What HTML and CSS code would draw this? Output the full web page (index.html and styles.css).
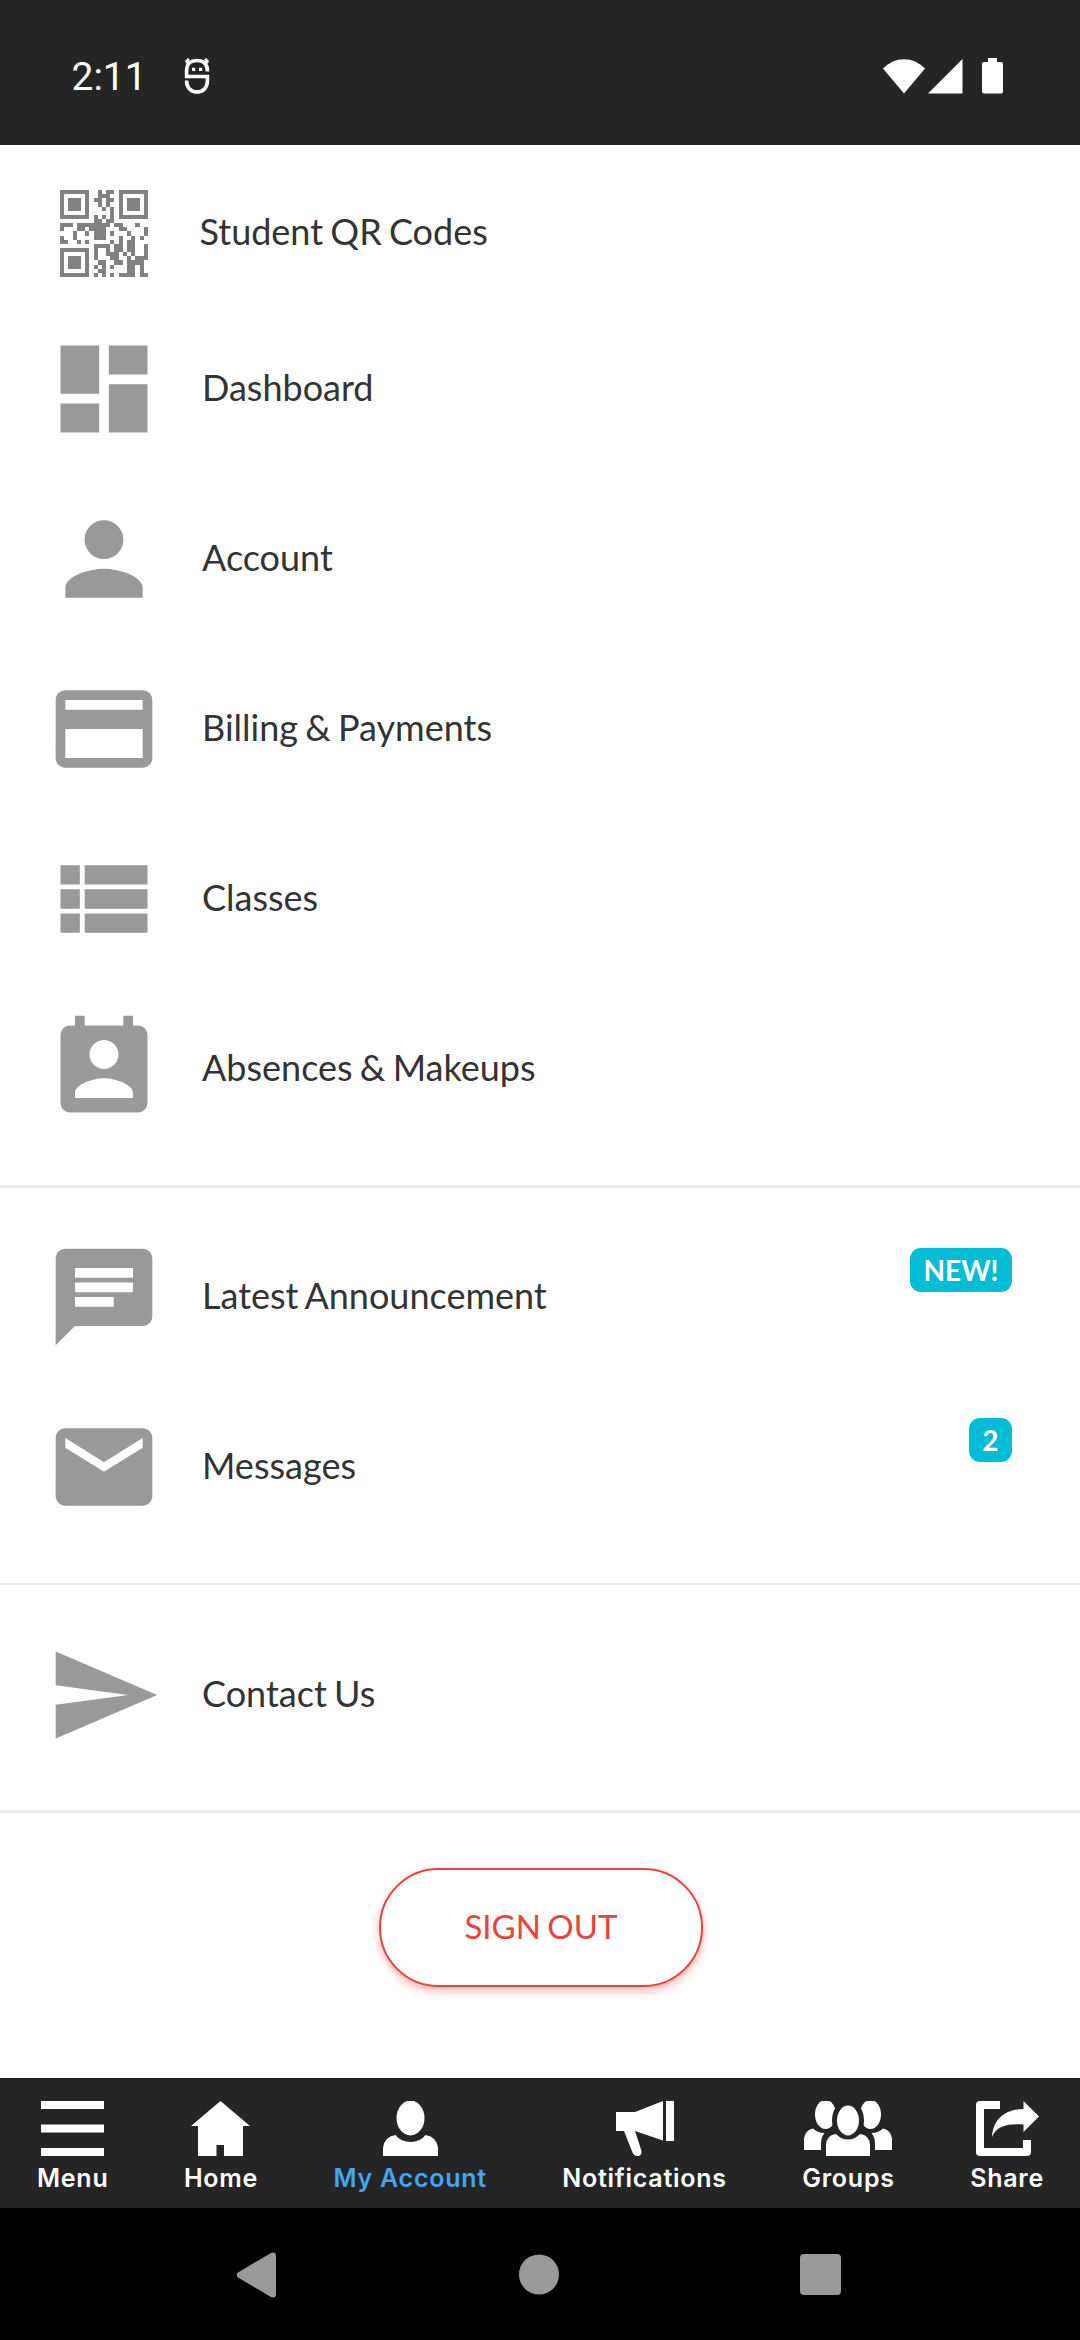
FILE: index.html
```html
<!DOCTYPE html>
<html lang="en">
<head>
<meta charset="utf-8">
<title>My Account</title>
<link rel="stylesheet" href="styles.css">
</head>
<body>
<header class="status">
  <span class="time">2:11</span>
  <svg class="logo" width="26" height="38" viewBox="0 0 26 38" fill="none" stroke="#fff" stroke-width="3.6"><path d="M23.5 14.500C23.500 6 19 3.500 13 3.500S2.600 6 2.600 14V19.500H23.400V24C23.400 31.500 18 35 13 35S2.600 31.500 2.600 24V23.500"/><path d="M1.500 3.500l5 3M4.500 1.500l-2 5M24.500 3.500l-5 3M21.500 1.500l2 5" stroke-width="2.400"/><path d="M8 12.300h3.200M15 12.300h3.200" stroke-width="3.200"/></svg>
  <span class="signals">
    <svg width="42" height="36" viewBox="0 0 42 36" fill="#fff"><path d="M0 10.500C12-2 30-2 42 10.500L21 35.500Z"/></svg>
    <svg class="cell" width="35" height="36" viewBox="0 0 35 36" fill="#fff"><path d="M0 35.500L34.500 1V35.500Z"/></svg>
    <svg class="battery" width="21" height="36" viewBox="0 0 21 36" fill="#fff"><path d="M6 0H15V4H19Q21 4 21 6V33.500Q21 35.500 19 35.500H2Q0 35.500 0 33.500V6Q0 4 2 4H6Z"/></svg>
  </span>
</header>

<main class="menu">
  <section class="group">
    <a class="row row-qr">
      <span class="icon"><svg width="88" height="87" viewBox="0 0 21 21" preserveAspectRatio="none" shape-rendering="crispEdges" fill="none" stroke="#818181"><path d="M.5 .5h6v6h-6zM14.500 .5h6v6h-6zM.5 14.500h6v6h-6z"/><path d="M2 3.500h3M16 3.500h3M2 17.500h3" stroke-width="3"/><path d="M9 .5h1m1 0h2M9 1.500h3M8 2.500h2m1 0h2M9 3.500h1m1 0h1M10 4.500h1m1 0h1M12 5.500h1M8 6.500h1m1 0h1m1 0h1M8 7.500h2m1 0h2M0 8.500h3m1 0h8m1 0h2m3 0h1M0 9.500h1m3 0h2m1 0h4m3 0h2m4 0h1M3 10.500h1m2 0h1m1 0h3m1 0h1m3 0h1m3 0h1M0 11.500h1m2 0h1m4 0h3m3 0h1m2 0h1m1 0h1M0 12.500h2m2 0h1m1 0h1m5 0h1m1 0h1m1 0h2M8 13.500h4m1 0h2m1 0h2m2 0h1M8 14.500h1m2 0h1m1 0h2m1 0h2m2 0h1M8 15.500h1m2 0h3m1 0h1m1 0h1m2 0h1M8 16.500h1m3 0h2m2 0h1m1 0h3M9 17.500h2m2 0h2m1 0h4M8 18.500h1m1 0h1m1 0h1m3 0h2m1 0h1M9 19.500h2m5 0h2m1 0h1M8 20.500h1m1 0h1m1 0h1m1 0h4m1 0h2"/></svg></span>
      <span class="label">Student QR Codes</span>
    </a>
    <a class="row">
      <span class="icon"><svg viewBox="0 0 24 24"><path d="M3 13h8V3H3v10zm0 8h8v-6H3v6zm10 0h8V11h-8v10zm0-18v6h8V3h-8z"/></svg></span>
      <span class="label">Dashboard</span>
    </a>
    <a class="row">
      <span class="icon"><svg viewBox="0 0 24 24"><path d="M12 12c2.210 0 4-1.790 4-4s-1.790-4-4-4-4 1.790-4 4 1.790 4 4 4zm0 2c-2.670 0-8 1.340-8 4v2h16v-2c0-2.660-5.330-4-8-4z"/></svg></span>
      <span class="label">Account</span>
    </a>
    <a class="row">
      <span class="icon"><svg viewBox="0 0 24 24"><path d="M20 4H4c-1.110 0-1.990.890-1.990 2L2 18c0 1.110.890 2 2 2h16c1.110 0 2-.890 2-2V6c0-1.110-.890-2-2-2zm0 14H4v-6h16v6zm0-10H4V6h16v2z"/></svg></span>
      <span class="label">Billing &amp; Payments</span>
    </a>
    <a class="row">
      <span class="icon"><svg viewBox="0 0 24 24"><path d="M3 14h4v-4H3v4zm0 5h4v-4H3v4zM3 9h4V5H3v4zm5 5h13v-4H8v4zm0 5h13v-4H8v4zM8 5v4h13V5H8z"/></svg></span>
      <span class="label">Classes</span>
    </a>
    <a class="row">
      <span class="icon"><svg viewBox="0 0 24 24"><path d="M19 3h-1V1h-2v2H8V1H6v2H5c-1.110 0-2 .9-2 2v14c0 1.100.890 2 2 2h14c1.100 0 2-.9 2-2V5c0-1.100-.9-2-2-2zm-7 3c1.660 0 3 1.340 3 3s-1.340 3-3 3-3-1.340-3-3 1.340-3 3-3zm6 12H6v-1c0-2 4-3.100 6-3.100s6 1.100 6 3.100v1z"/></svg></span>
      <span class="label">Absences &amp; Makeups</span>
    </a>
  </section>
  <section class="group messages">
    <a class="row">
      <span class="icon"><svg viewBox="0 0 24 24"><path d="M20 2H4c-1.100 0-1.990.9-1.990 2L2 22l4-4h14c1.100 0 2-.9 2-2V4c0-1.100-.9-2-2-2zM6 9h12v2H6V9zm8 5H6v-2h8v2zm4-6H6V6h12v2z"/></svg></span>
      <span class="label">Latest Announcement</span>
      <span class="badge">NEW!</span>
    </a>
    <a class="row">
      <span class="icon"><svg viewBox="0 0 24 24"><path d="M20 4H4c-1.100 0-1.990.9-1.990 2L2 18c0 1.100.9 2 2 2h16c1.100 0 2-.9 2-2V6c0-1.100-.9-2-2-2zm0 4l-8 5-8-5V6l8 5 8-5v2z"/></svg></span>
      <span class="label">Messages</span>
      <span class="badge">2</span>
    </a>
  </section>
  <section class="group contact">
    <a class="row">
      <span class="icon"><svg viewBox="0 0 24 24"><path d="M2.010 21L23 12 2.010 3 2 10l15 2-15 2z"/></svg></span>
      <span class="label">Contact Us</span>
    </a>
  </section>
  <button class="signout">SIGN OUT</button>
</main>

<nav class="tabs">
  <a class="tab"><svg width="63" height="55" viewBox="0 0 63 55"><path d="M0 0H63V8H0zM0 23.500H63V31.500H0zM0 47H63V55H0z"/></svg><span>Menu</span></a>
  <a class="tab"><svg width="59" height="55" viewBox="0 0 59 55"><path d="M29.500 0L59 25H52V55H33V44H25.500V55H7V25H0Z"/></svg><span>Home</span></a>
  <a class="tab active"><svg width="55" height="55" viewBox="0 0 55 55"><ellipse cx="27.500" cy="17" rx="14" ry="17.500"/><path d="M0 55V47Q1 36 12.500 34Q18 41 27.500 41T42.500 34Q54 36 55 47V55Z"/></svg><span>My Account</span></a>
  <a class="tab"><svg width="58" height="55" viewBox="0 0 58 55"><path d="M0 11H19L47 0V39.500L19 30L25.500 50Q26 55 21.500 55Q18 55 16.500 51.500L8 30H0ZM50 0H58V40H50Z"/></svg><span>Notifications</span></a>
  <a class="tab"><svg width="88" height="55" viewBox="0 0 88 55"><ellipse cx="21.500" cy="13.500" rx="10.500" ry="14.500"/><ellipse cx="66.500" cy="13.500" rx="10.500" ry="14.500"/><path d="M0 49V38Q1 29 9 27.500Q14 32 20.500 32Q17 36 17 43V49ZM88 49V38Q87 29 79 27.500Q74 32 67.500 32Q71 36 71 43V49Z"/><ellipse class="cut" cx="44" cy="19.500" rx="13.500" ry="17.500"/><path d="M22 55V44Q22.500 34 32 33Q37 38.500 44 38.500T56 33Q65.500 34 66 44V55Z"/></svg><span>Groups</span></a>
  <a class="tab"><svg width="63" height="55" viewBox="0 0 63 55"><path d="M24 0H4Q0 0 0 4V51Q0 55 4 55H51Q55 55 55 51V39H47V47H8V8H24ZM47.500 0L63 15.500L47.500 31V23.500C32 22.500 21 24.500 16 36C17 18 30 8 47.500 8Z"/></svg><span>Share</span></a>
</nav>

<footer class="system">
  <svg width="42" height="46" viewBox="0 0 42 46"><path d="M2 20.500L35 1Q40 -1 40 4V42Q40 47 35 45L2 25.500Q-.5 23 2 20.500Z"/></svg>
  <svg width="42" height="46" viewBox="0 0 42 46"><circle cx="21" cy="22.500" r="20"/></svg>
  <svg width="42" height="46" viewBox="0 0 42 46"><rect x="0" y="2" width="41" height="41" rx="4"/></svg>
</footer>
</body>
</html>
```
FILE: styles.css
```css
* { box-sizing: border-box; }

body {
  margin: 0;
  width: 1080px;
  height: 2340px;
  display: flex;
  flex-direction: column;
  background: #fff;
  color: #333;
  font-family: Lato, "Liberation Sans", sans-serif;
  overflow: hidden;
}

svg { display: block; flex: none; }

.status {
  height: 145px;
  flex: none;
  display: flex;
  align-items: center;
  padding: 6px 77px 0 71.500px;
  background: #252525;
  color: #fff;
}

.time {
  font: 39px/46px Roboto, "Liberation Sans", sans-serif;
  width: 112px;
  padding-top: 3px;
}

.signals {
  display: flex;
  margin-left: auto;
}

.cell { margin-left: 3px; }
.battery { margin-left: 19px; }

.menu {
  flex: 1;
  display: flex;
  flex-direction: column;
}

.group {
  padding: 24px 0 31px;
  border-bottom: 3px solid #ebebeb;
}

.group:first-child { padding-top: 0; }

.messages { border-bottom-width: 2px; }

.contact { padding: 25px 0 30px; }

.row {
  display: flex;
  align-items: center;
  height: 170px;
  padding: 0 68px 0 46px;
}

.row-qr {
  height: 159px;
  padding-top: 17px;
}

.row-qr .label { margin-left: 37.500px; }

.icon {
  width: 116px;
  display: flex;
  justify-content: center;
  fill: #999;
}

.icon svg { flex: 0 1 auto; }

.label {
  margin-left: 40px;
  padding-bottom: 4px;
  font-size: 36px;
  line-height: 44px;
  word-spacing: -2px;
}

.badge {
  align-self: flex-start;
  height: 44px;
  margin: 36px 0 0 auto;
  padding: 0 13.500px;
  border-radius: 11px;
  background: #00bcd4;
  color: #fff;
  font-size: 28px;
  font-weight: 700;
  line-height: 44px;
}

.signout {
  width: 324px;
  height: 119px;
  margin: 55px 0 0 379px;
  padding: 0 0 4px;
  border: 2px solid #e8443a;
  border-radius: 60px;
  background: #fff;
  box-shadow: 0 4px 8px rgba(244, 67, 54, .4);
  color: #e8443a;
  font: 33px/40px Lato, "Liberation Sans", sans-serif;
  word-spacing: -2px;
}

.tabs {
  height: 130px;
  flex: none;
  display: flex;
  justify-content: space-between;
  padding: 23px 36px 0 37px;
  background: #252525;
  color: #fff;
  fill: #fff;
  font: 600 25px/30px Inter, "Liberation Sans", sans-serif;
  letter-spacing: .75px;
}

.tab {
  display: flex;
  flex-direction: column;
  align-items: center;
  gap: 7px;
}

.active span { color: #42a5f5; }

.cut { stroke: #252525; stroke-width: 5px; }

.system {
  height: 132px;
  flex: none;
  display: flex;
  justify-content: space-between;
  padding: 44px 238px 0 236px;
  background: #000;
  fill: #999;
}
```
